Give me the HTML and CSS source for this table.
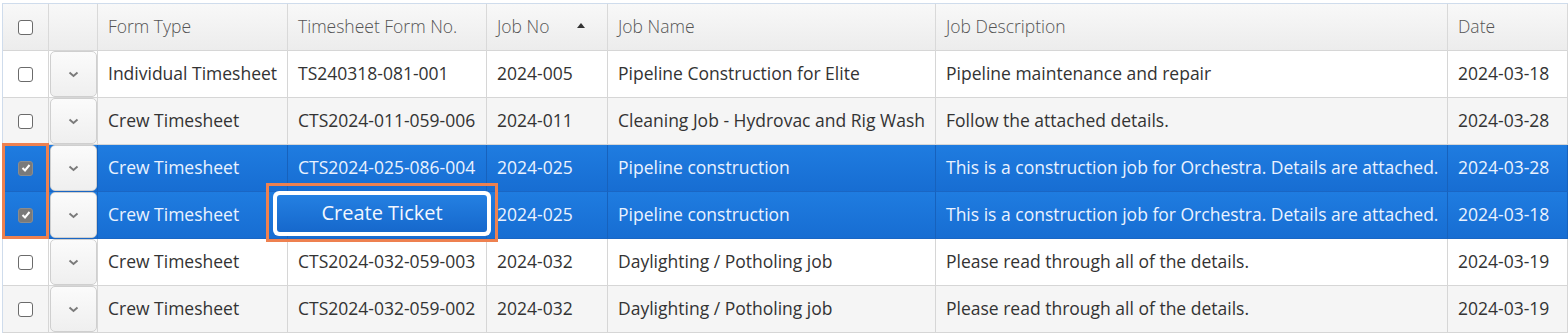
FILE: index.html
```html
<!DOCTYPE html>
<html>
<head>
<meta charset="utf-8">
<link rel="stylesheet" href="styles.css">
</head>
<body>
<div class="grid">
  <div class="row head">
    <div class="cell center"><span class="cb"></span></div>
    <div class="cell"></div>
    <div class="cell">Form Type</div>
    <div class="cell">Timesheet Form No.</div>
    <div class="cell sort">Job No<span class="arrow"></span></div>
    <div class="cell">Job Name</div>
    <div class="cell">Job Description</div>
    <div class="cell">Date</div>
  </div>
  <div class="row">
    <div class="cell center"><span class="cb"></span></div>
    <div class="cell exp"><span class="btn"><svg width="11" height="7" viewBox="0 0 11 7"><path d="M1.5 1.5 L5.5 5 L9.5 1.5" fill="none" stroke="#7a7a7a" stroke-width="1.9"/></svg></span></div>
    <div class="cell">Individual Timesheet</div>
    <div class="cell">TS240318-081-001</div>
    <div class="cell">2024-005</div>
    <div class="cell">Pipeline Construction for Elite</div>
    <div class="cell">Pipeline maintenance and repair</div>
    <div class="cell">2024-03-18</div>
  </div>
  <div class="row alt">
    <div class="cell center"><span class="cb"></span></div>
    <div class="cell exp"><span class="btn"><svg width="11" height="7" viewBox="0 0 11 7"><path d="M1.5 1.5 L5.5 5 L9.5 1.5" fill="none" stroke="#7a7a7a" stroke-width="1.9"/></svg></span></div>
    <div class="cell">Crew Timesheet</div>
    <div class="cell">CTS2024-011-059-006</div>
    <div class="cell">2024-011</div>
    <div class="cell">Cleaning Job - Hydrovac and Rig Wash</div>
    <div class="cell">Follow the attached details.</div>
    <div class="cell">2024-03-28</div>
  </div>
  <div class="row sel">
    <div class="cell center"><span class="cb on"><svg width="10" height="10" viewBox="0 0 10 10"><path d="M1.5 5 L4 7.5 L8.5 2" fill="none" stroke="#fff" stroke-width="2"/></svg></span></div>
    <div class="cell exp"><span class="btn"><svg width="11" height="7" viewBox="0 0 11 7"><path d="M1.5 1.5 L5.5 5 L9.5 1.5" fill="none" stroke="#7a7a7a" stroke-width="1.9"/></svg></span></div>
    <div class="cell">Crew Timesheet</div>
    <div class="cell">CTS2024-025-086-004</div>
    <div class="cell">2024-025</div>
    <div class="cell">Pipeline construction</div>
    <div class="cell">This is a construction job for Orchestra. Details are attached.</div>
    <div class="cell">2024-03-28</div>
  </div>
  <div class="row sel">
    <div class="cell center"><span class="cb on"><svg width="10" height="10" viewBox="0 0 10 10"><path d="M1.5 5 L4 7.5 L8.5 2" fill="none" stroke="#fff" stroke-width="2"/></svg></span></div>
    <div class="cell exp"><span class="btn"><svg width="11" height="7" viewBox="0 0 11 7"><path d="M1.5 1.5 L5.5 5 L9.5 1.5" fill="none" stroke="#7a7a7a" stroke-width="1.9"/></svg></span></div>
    <div class="cell">Crew Timesheet</div>
    <div class="cell"></div>
    <div class="cell">2024-025</div>
    <div class="cell">Pipeline construction</div>
    <div class="cell">This is a construction job for Orchestra. Details are attached.</div>
    <div class="cell">2024-03-18</div>
  </div>
  <div class="row">
    <div class="cell center"><span class="cb"></span></div>
    <div class="cell exp"><span class="btn"><svg width="11" height="7" viewBox="0 0 11 7"><path d="M1.5 1.5 L5.5 5 L9.5 1.5" fill="none" stroke="#7a7a7a" stroke-width="1.9"/></svg></span></div>
    <div class="cell">Crew Timesheet</div>
    <div class="cell">CTS2024-032-059-003</div>
    <div class="cell">2024-032</div>
    <div class="cell">Daylighting / Potholing job</div>
    <div class="cell">Please read through all of the details.</div>
    <div class="cell">2024-03-19</div>
  </div>
  <div class="row alt">
    <div class="cell center"><span class="cb"></span></div>
    <div class="cell exp"><span class="btn"><svg width="11" height="7" viewBox="0 0 11 7"><path d="M1.5 1.5 L5.5 5 L9.5 1.5" fill="none" stroke="#7a7a7a" stroke-width="1.9"/></svg></span></div>
    <div class="cell">Crew Timesheet</div>
    <div class="cell">CTS2024-032-059-002</div>
    <div class="cell">2024-032</div>
    <div class="cell">Daylighting / Potholing job</div>
    <div class="cell">Please read through all of the details.</div>
    <div class="cell">2024-03-19</div>
  </div>

  <div class="hl-check"></div>
  <div class="hl-ticket"><div class="ticket-wrap"><button class="ticket">Create Ticket</button></div></div>
</div>
</body>
</html>
```

FILE: styles.css
```css
html, body {
  margin: 0;
  padding: 0;
  background: #fff;
}
body {
  font-family: "Open Sans", "DejaVu Sans", sans-serif;
  font-size: 17.5px;
  color: #333;
  overflow: hidden;
}
.grid {
  position: relative;
  margin: 3px 0 0 2px;
  border-top: 1px solid #cfdcec;
  border-left: 1px solid #cfdcec;
}
.row {
  display: grid;
  grid-template-columns: 46px 49px 190px 199px 121px 328px 512px 1fr;
  height: 47px;
  background: #fff;
}
.row.alt { background: #f5f5f5; }
.cell {
  box-sizing: border-box;
  height: 47px;
  border-right: 1px solid #d6d6d6;
  border-bottom: 1px solid #d6d6d6;
  padding: 0 0 2px 10px;
  display: flex;
  align-items: center;
  white-space: nowrap;
  overflow: hidden;
}
.cell.center {
  padding: 0;
  justify-content: center;
}
.head {
  background: linear-gradient(#f8f8f8, #ececec);
}
.head .cell {
  font-weight: 300;
  color: #555;
  border-right-color: #d9d9d9;
}
.sort { position: relative; }
.arrow {
  position: absolute;
  left: 90px;
  top: 19px;
  width: 0;
  height: 0;
  border-left: 4px solid transparent;
  border-right: 4px solid transparent;
  border-bottom: 5px solid #333;
}
.cb {
  box-sizing: border-box;
  width: 15px;
  height: 15px;
  border: 1.5px solid #6b6b6b;
  border-radius: 3px;
  background: #fff;
  display: flex;
  align-items: center;
  justify-content: center;
}
.cb.on {
  background: #7a7a7a;
  border-color: #8c8c8c;
}
.cell.exp {
  padding: 0 0 0 1px;
  align-items: stretch;
}
.btn {
  flex: 1;
  margin: 0;
  border: 1px solid #cfcfcf;
  border-radius: 5px;
  background: linear-gradient(#fbfbfb, #efefef);
  display: flex;
  align-items: center;
  justify-content: center;
}
.row.sel {
  background: linear-gradient(#1f7ce0, #176dd2);
  color: #eaf2ff;
}
.row.sel .cell {
  border-right-color: #1762bd;
  border-bottom-color: #1a66c4;
}
.hl-check {
  position: absolute;
  left: -1px;
  top: 139px;
  width: 47px;
  height: 96px;
  box-sizing: border-box;
  border: 3px solid #ee8150;
}
.hl-ticket {
  position: absolute;
  left: 263px;
  top: 179px;
  width: 232px;
  height: 59px;
  box-sizing: border-box;
  border: 3px solid #ee8150;
  padding: 5px 4px 3px 4px;
}
.ticket-wrap {
  box-sizing: border-box;
  height: 100%;
  background: #fff;
  border-radius: 6px;
  padding: 4px;
  display: flex;
}
.ticket {
  flex: 1;
  border: 0;
  border-radius: 3px;
  background: linear-gradient(#2480e2, #1668cc);
  color: #f2f7ff;
  font-family: "Open Sans", "DejaVu Sans", sans-serif;
  font-size: 20px;
  padding: 0 0 2px 0;
}
```
